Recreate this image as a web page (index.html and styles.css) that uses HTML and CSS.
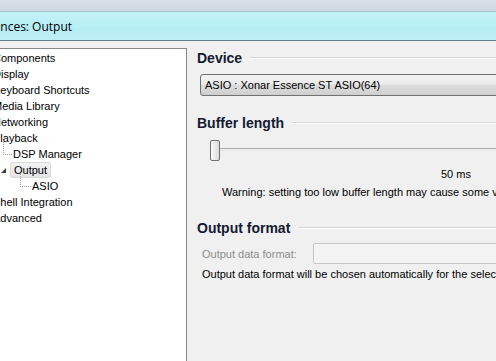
FILE: index.html
```html
<!DOCTYPE html>
<html lang="en">

<head>
  <meta charset="UTF-8" />
  <title>Preferences: Output</title>
  <link rel="stylesheet" href="styles.css">
</head>

<body>
  <div class="window">
    <div class="frame-top"></div>
    <div class="titlebar"><span class="title">Preferences: Output</span></div>
    <div class="client">
      <div class="tree-wrap">
        <ul class="tree">
          <li>Components</li>
          <li>Display</li>
          <li>Keyboard Shortcuts</li>
          <li>Media Library</li>
          <li>Networking</li>
          <li>Playback</li>
          <li class="child"><span class="dots"></span>DSP Manager</li>
          <li class="child"><span class="arrow"></span><span class="selected">Output</span></li>
          <li class="grandchild"><span class="dots"></span>ASIO</li>
          <li>Shell Integration</li>
          <li>Advanced</li>
        </ul>
      </div>

      <div class="page">
        <div class="group-title"><span>Device</span></div>
        <div class="combo">ASIO : Xonar Essence ST ASIO(64)</div>

        <div class="group-title buffer"><span>Buffer length</span></div>
        <div class="slider">
          <div class="thumb"></div>
          <div class="track"></div>
        </div>
        <div class="value">50 ms</div>
        <div class="warning">Warning: setting too low buffer length may cause some visual effects to malfunction.</div>

        <div class="group-title format"><span>Output format</span></div>
        <div class="format-row">
          <span class="disabled-label">Output data format:</span>
          <div class="disabled-box"></div>
        </div>
        <div class="note">Output data format will be chosen automatically for the selected device.</div>
      </div>
    </div>
  </div>
</body>

</html>
```

FILE: styles.css
```css
body {
  margin: 0;
  padding: 0;
  overflow: hidden;
  font-family: "Liberation Sans", Arial, sans-serif;
  font-size: 11px;
  color: #000;
  background: #f0f0f0;
}

.window {
  width: 700px;
  height: 361px;
  display: flex;
  flex-direction: column;
}

.frame-top {
  height: 11px;
  background: linear-gradient(#d9e1ea, #cdd7e1);
  border-bottom: 1px solid #a9c3cb;
}

.titlebar {
  height: 28px;
  background: linear-gradient(#c4f3f9, #b6edf4 60%, #bdf0f6);
  display: flex;
  align-items: center;
  white-space: nowrap;
  overflow: hidden;
}

.title {
  font-family: "Open Sans", "DejaVu Sans", sans-serif;
  font-size: 12px;
  margin-left: -41px;
  color: #000;
}

.client {
  flex: 1;
  display: flex;
  border-top: 1px solid #5f7f86;
  background: #f0f0f0;
}

/* tree */
.tree-wrap {
  width: 186px;
  margin-top: 7px;
  background: #fff;
  border-top: 1px solid #828790;
  border-right: 1px solid #828790;
  overflow: hidden;
}

.tree {
  list-style: none;
  margin: 1px 0 0 -7px;
  padding: 0;
}

.tree li {
  height: 16px;
  line-height: 16px;
  white-space: nowrap;
  position: relative;
}

.tree li.child {
  padding-left: 20px;
}

.tree li.grandchild {
  padding-left: 39px;
}

.dots {
  position: absolute;
  top: -4px;
  width: 8px;
  height: 12px;
  border-left: 1px dotted #a0a0a0;
  border-bottom: 1px dotted #a0a0a0;
}

.child .dots {
  left: 10px;
}

.grandchild .dots {
  left: 27px;
  width: 10px;
}

.arrow {
  position: absolute;
  left: 8px;
  top: 6px;
  width: 0;
  height: 0;
  border-left: 5px solid transparent;
  border-bottom: 5px solid #404040;
}

.selected {
  display: inline-block;
  height: 14px;
  line-height: 14px;
  padding: 0 3px;
  margin-left: -3px;
  background: linear-gradient(#f2f2f2, #e5e5e5);
  border: 1px solid #d9d9d9;
  border-radius: 2px;
}

/* right page */
.page {
  flex: 1;
  padding: 7px 0 0 10px;
}

.group-title {
  display: flex;
  align-items: center;
  height: 20px;
  font-size: 14px;
  font-weight: bold;
  color: #151a30;
}

.group-title::after {
  content: "";
  flex: 1;
  margin-left: 8px;
  border-top: 1px solid #d5d5d5;
  border-bottom: 1px solid #fff;
}

.combo {
  margin: 6px 0 0 3px;
  height: 20px;
  line-height: 20px;
  padding-left: 4px;
  border: 1px solid #707070;
  border-radius: 3px;
  background: linear-gradient(#f2f2f2 0%, #ebebeb 45%, #dddddd 50%, #cfcfcf 100%);
}

.buffer {
  margin-top: 17px;
}

.slider {
  display: flex;
  align-items: center;
  margin: 6px 0 0 13px;
  height: 22px;
}

.thumb {
  width: 8px;
  height: 19px;
  border: 1px solid #707070;
  border-radius: 2px;
  background: linear-gradient(to right, #fafafa, #dadada);
}

.track {
  flex: 1;
  height: 1px;
  border-top: 1px solid #a8a8a8;
  border-bottom: 1px solid #e8e8e8;
  margin-top: -2px;
}

.value {
  margin: 5px 0 0 244px;
  height: 16px;
  line-height: 16px;
}

.warning {
  margin: 2px 0 0 25px;
  height: 16px;
  line-height: 16px;
  white-space: nowrap;
}

.format {
  margin-top: 18px;
}

.format-row {
  display: flex;
  align-items: center;
  margin: 5px 0 0 5px;
}

.disabled-label {
  color: #8d8d8d;
  width: 111px;
}

.disabled-box {
  flex: 1;
  height: 19px;
  border: 1px solid #c6c6c6;
  border-radius: 2px;
  background: #f4f4f4;
}

.note {
  margin: 2px 0 0 5px;
  height: 16px;
  line-height: 16px;
  white-space: nowrap;
}
```
